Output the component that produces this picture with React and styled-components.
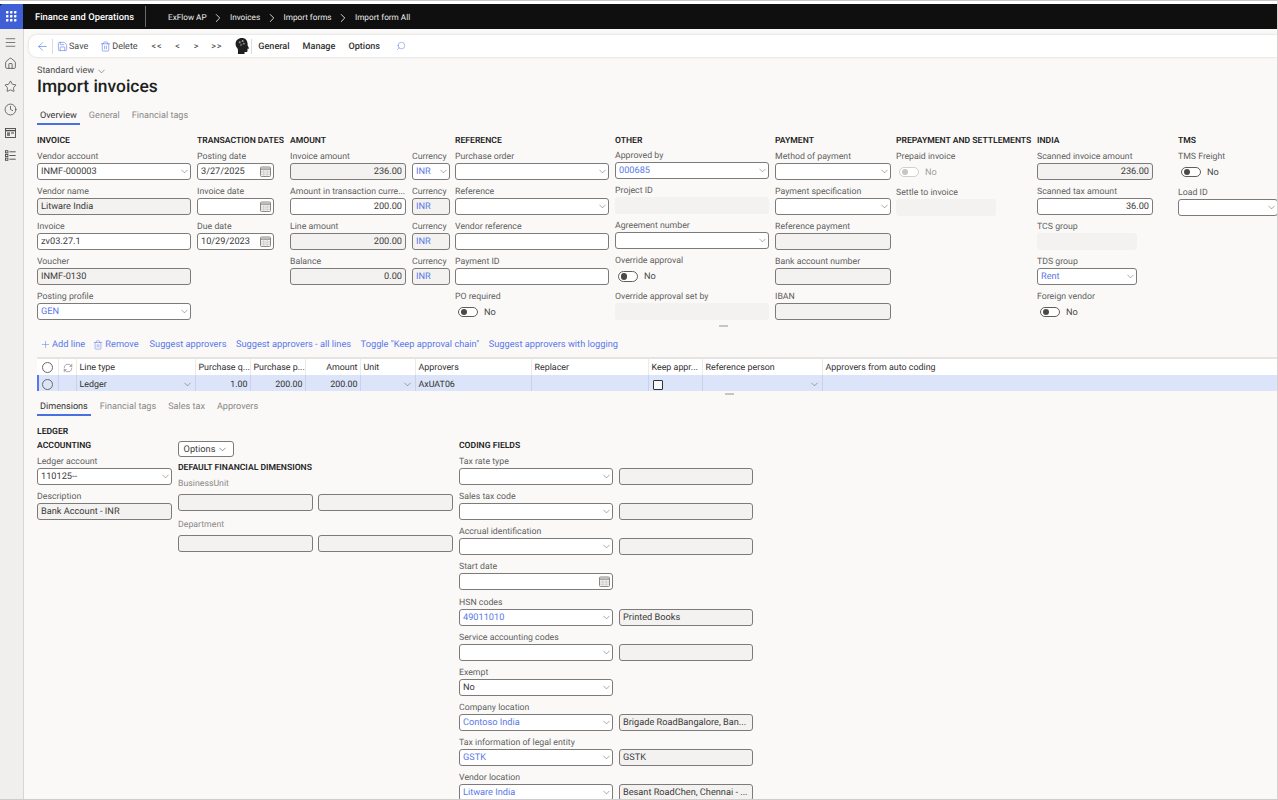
import React from 'react';
import styled, { createGlobalStyle } from 'styled-components';
import { ArrowLeft, ChevronDown, ChevronRight, Clock, Home, Menu, Plus, RefreshCw, Save, Search, Star, Trash2 } from 'lucide-react';

const Global = createGlobalStyle`
  html, body { margin: 0; padding: 0; background: #faf9f8; }
  * { box-sizing: border-box; }
  body { font-family: Roboto, "Open Sans", "Liberation Sans", sans-serif; font-size: 9px; color: #323130; text-rendering: geometricPrecision; }
`;

const BLUE = '#5a78e8';

const Shell = styled.div`
  width: 1278px; height: 800px; overflow: hidden; display: flex; flex-direction: column;
  background: #faf9f8; border-bottom: 1px solid #cfcdcb; border-right: 1px solid #d4d2d0;
`;
const TopStrip = styled.div`
  height: 4px; flex: none; background: #fff; border-top: 1.5px solid #c8c6c4;
`;
const TopBar = styled.header`
  height: 25px; flex: none; background: #0f0f0f; color: #fff; display: flex; align-items: center;
`;
const AppTile = styled.div`
  width: 23px; height: 25px; background: #3f5fd6; display: grid; place-items: center; border-radius: 3px 0 0 0;
`;
const Brand = styled.div`
  margin-left: 12px; width: 110px; height: 25px; font-size: 9.4px; font-weight: 500; line-height: 27px; white-space: nowrap;
`;
const BarDivider = styled.div`width: 1px; height: 21px; background: #6a6a6a;`;
const Crumbs = styled.nav`
  margin-left: 22px; padding-top: 2px; display: flex; align-items: center; gap: 3.7px; font-size: 8.2px; color: #eee;
  svg { margin: 0 1px; }
`;
const Body = styled.div`flex: 1; min-height: 0; display: flex;`;
const Sidebar = styled.aside`
  width: 24px; flex: none; background: #f0efed; border-right: 1px solid #d8d6d4; display: flex; flex-direction: column;
  align-items: center; padding-right: 3px; padding-top: 4px; color: #3b3a39;
`;
const SideSlot = styled.div`
  height: 23px; display: flex; align-items: center; justify-content: center; width: 100%;
  &:first-child { height: 19px; }
`;
const Main = styled.main`flex: 1; min-width: 0; display: flex; flex-direction: column;`;
const CommandBar = styled.div`
  height: 22px; flex: none; margin: 6px 0 0 5px; background: #fff; border-radius: 8px 0 0 8px;
  box-shadow: 0 0 3px rgba(0,0,0,.16); display: flex; align-items: center; padding: 2px 0 0 7px; position: relative;
`;
const CmdSep = styled.div`width: 1px; height: 15px; margin-top: -2px; background: #dedcda; margin-left: ${p => p.$ml}px; margin-right: ${p => p.$mr}px;`;
const CmdBtn = styled.span`
  display: inline-flex; align-items: center; gap: 1px; font-size: 9px; color: #4a4948; margin-left: ${p => p.$ml || 0}px;
  svg { color: ${BLUE}; margin-top: -2px; }
`;
const BackSlot = styled.span`display: flex; margin-top: -2px;`;
const NavArrow = styled.span`
  font-size: 9px; color: #444; letter-spacing: .8px; margin-left: ${p => p.$ml}px; line-height: 1;
`;
const HeadSlot = styled.span`margin: -2px 0 0 13px; display: flex;`;
const MenuItem = styled.span`
  font-size: 9.1px; font-weight: 500; color: #333; margin-left: ${p => p.$ml}px;
`;
const SearchSlot = styled.span`margin: -2px 0 0 16px; display: flex; transform: scaleX(-1);`;
const Content = styled.div`
  padding-left: 13px; display: flex; flex-direction: column; flex: 1; min-height: 0;
  & > * { flex: none; }
`;
const ViewPicker = styled.div`
  margin-top: 7px; height: 14px; display: flex; align-items: center; gap: 2px; font-size: 9.1px; color: #4a4948;
`;
const PageTitle = styled.h1`
  margin: -2px 0 0; font-size: 17.4px; line-height: 22px; font-weight: 500; color: #201f1e;
`;
const Tabs = styled.div`display: flex; gap: ${p => p.$gap}px; margin-top: ${p => p.$mt}px; height: 18px;`;
const Tab = styled.div`
  padding: 0 ${p => (p.$active ? 3 : 0)}px; height: 18px; line-height: 19px; font-size: 9.1px;
  margin-right: ${p => (p.$active ? -3 : 0)}px;
  color: ${p => (p.$active ? '#323130' : '#8a8886')};
  border-bottom: 2px solid ${p => (p.$active ? '#4a6fe0' : 'transparent')};
`;
const FormRow = styled.section`display: flex; margin-top: 8px; height: 191px; width: 1241px; overflow: hidden;`;
const Col = styled.div`flex: none; width: ${p => p.$w}px; margin-right: ${p => p.$mr || 0}px;`;
const SectionTitle = styled.h3`
  margin: 0 0 ${p => p.$mb ?? 2}px; font-size: 8.6px; line-height: 16px; height: 14px; font-weight: 600; color: #252423;
  text-transform: uppercase; white-space: nowrap;
`;
const Field = styled.div`
  margin-bottom: ${p => (p.$tight ? 4.13 : 4)}px; width: ${p => (p.$w ? `${p.$w}px` : 'auto')};
`;
const Label = styled.div`
  height: 14px; line-height: 16px; font-size: 8.75px; white-space: nowrap;
  color: ${p => (p.$faint ? '#8a8886' : '#615f5d')};
`;
const Box = styled.div`
  height: 17px; flex: ${p => (p.$grow ? 1 : 'none')}; width: ${p => (p.$w ? `${p.$w}px` : 'auto')};
  border-radius: 3px; border: 1px solid ${p => (p.$bare ? '#f3f2f1' : '#7d7b79')};
  background: ${p => (p.$gray || p.$bare ? '#f3f2f1' : '#fff')};
  display: flex; align-items: center; padding: 0 3px; font-size: 9.2px; white-space: nowrap; overflow: hidden;
  color: ${p => (p.$link ? BLUE : '#3b3a39')};
`;
const BoxText = styled.span`flex: 1; overflow: hidden; text-align: ${p => (p.$right ? 'right' : 'left')};`;
const Adorn = styled.span`display: flex; flex: none; margin-right: ${p => p.$mr}px;`;
const Pair = styled.div`display: flex; gap: ${p => p.$gap ?? 6}px;`;
const ToggleRow = styled.div`
  height: 18px; display: flex; align-items: center; gap: 6px; padding-left: 3px; font-size: 9.2px;
  color: ${p => (p.$off ? '#a19f9d' : '#4a4948')};
`;
const ToggleTrack = styled.span`
  width: 20px; height: 10.5px; border-radius: 6px; border: 1px solid ${p => (p.$off ? '#d2d0ce' : '#605e5c')};
  background: #fff; display: flex; align-items: center; padding-left: 1.5px;
`;
const ToggleKnob = styled.span`
  width: 6.5px; height: 6.5px; border-radius: 50%; background: ${p => (p.$off ? '#c8c6c4' : '#4a4948')};
`;
const Splitter = styled.div`
  width: 9px; height: 2px; background: #c8c6c4; margin: ${p => p.$mt}px 0 0 ${p => p.$ml}px;
`;
const Actions = styled.div`
  height: 16px; margin-top: 9px; display: flex; align-items: center; padding: 1.5px 0 0 3px; color: ${BLUE}; font-size: 9.25px;
  white-space: nowrap;
`;
const Action = styled.span`
  display: inline-flex; align-items: center; gap: ${p => p.$gap ?? 1}px; margin-right: ${p => p.$mr ?? 9.5}px;
`;
const GridWrap = styled.div`margin-top: 5px; border-top: 2px solid #e6e4e2;`;
const GridRow = styled.div`
  display: grid; height: 16px; grid-template-columns: 22px 18px 119px 55px 55px 55px 55px 116px 117px 54px 120px 1fr;
  background: ${p => (p.$selected ? '#dbe4f8' : '#fff')};
  box-shadow: ${p => (p.$selected ? `inset 2px 0 0 ${BLUE}` : 'none')};
`;
const Cell = styled.div`
  display: flex; align-items: center; padding: ${p => (p.$selected ? '3px' : '1px')} 2.5px 0; font-size: 8.9px; white-space: nowrap; overflow: hidden;
  border-right: 1px solid ${p => (p.$selected ? '#c8d2ea' : '#ecebe9')};
  color: #323130;
  justify-content: ${p => p.$justify || 'flex-start'};
  &:last-child { border-right: none; }
`;
const Radio = styled.span`width: 11px; height: 11px; flex: none; border-radius: 50%; border: 1px solid #6b6967; background: transparent;`;
const Check = styled.span`width: 10px; height: 10px; flex: none; border: 1px solid #323130; background: #f6f7fc; margin-left: 1.5px; border-radius: 1px;`;
const LedgerHead = styled.div`
  margin-top: 8px; height: 14px; line-height: 16px; font-size: 8.6px; font-weight: 600; color: #252423;
`;
const Lower = styled.section`display: flex; gap: 6px;`;
const OptionsBtn = styled.div`
  margin-top: 3px; width: 56px; height: 16px; border: 1px solid #7d7b79; border-radius: 3px; background: #fff;
  display: flex; align-items: center; justify-content: center; gap: 2px; font-size: 9.2px; color: #3b3a39;
`;
const GapBlock = styled.div`margin-top: ${p => p.$mt}px;`;

const Chevron = () => <ChevronDown size={11} strokeWidth={1.1} color="#555" style={{ flex: 'none' }} />;
const CrumbChevron = () => <ChevronRight size={14} strokeWidth={1.5} />;
const Calendar = () => (
  <svg width="11" height="11" viewBox="0 0 11 11">
    <rect x="0.5" y="1" width="10" height="9.5" rx="1" fill="#f3f2f1" stroke="#8a8886" />
    <path d="M0.5 3.2h10" stroke="#8a8886" strokeWidth="1.2" />
    <path d="M3.7 3.5v7M7.2 3.5v7M1 6h9M1 8.2h9" stroke="#c8c6c4" strokeWidth=".7" />
  </svg>
);

const Input = ({ v = '', kind = 'text', tone, link, right, w, grow }) => (
  <Box $gray={tone === 'gray'} $bare={tone === 'bare'} $link={link} $w={w} $grow={grow}>
    <BoxText $right={right}>{v}</BoxText>
    {kind === 'select' && <Adorn $mr={-3}><Chevron /></Adorn>}
    {kind === 'date' && <Adorn $mr={-1}><Calendar /></Adorn>}
  </Box>
);

const Toggle = ({ off }) => (
  <ToggleRow $off={off}>
    <ToggleTrack $off={off}><ToggleKnob $off={off} /></ToggleTrack>
    No
  </ToggleRow>
);

const F = ({ label, children, w, tight, faint }) => (
  <Field $w={w} $tight={tight}>
    <Label $faint={faint}>{label}</Label>
    {children}
  </Field>
);

const HeadIcon = () => (
  <svg width="14" height="18" viewBox="0 0 15 18">
    <path fill="#1f1f1f" d="M7.5.3C3.4.3.6 3 .6 6.6c0 2 .8 3.4 1.8 4.6.6.8.8 1.6.8 2.6v3.9h7v-2.2h1.7c1 0 1.5-.6 1.5-1.5v-2.1h1.1c.4 0 .6-.4.4-.7l-1.4-2.7c0-.6.1-1.3 0-2C13.1 2.6 10.9.3 7.5.3z" />
    <circle cx="5" cy="5" r="1" fill="#9a9a9a" /><circle cx="8.2" cy="3.6" r=".9" fill="#b5b5b5" />
    <circle cx="9.6" cy="6.4" r="1" fill="#8c8c8c" /><circle cx="6.4" cy="7.8" r=".8" fill="#a5a5a5" />
    <path d="M5 5l3.2-1.4 1.4 2.8-3.2 1.4z" stroke="#7a7a7a" strokeWidth=".4" fill="none" />
  </svg>
);

const Workspace = () => (
  <svg width="11" height="10" viewBox="0 0 11 10" fill="none" stroke="#4a4948">
    <rect x=".5" y=".5" width="10" height="9" strokeWidth=".9" />
    <path d="M.5 2.6h10" strokeWidth="1.3" />
    <rect x="2" y="4.3" width="3" height="3.6" fill="#777" stroke="none" />
    <rect x="6" y="4.3" width="3" height="1.4" fill="#777" stroke="none" />
  </svg>
);
const ListIcon = () => (
  <svg width="11" height="11" viewBox="0 0 11 11" fill="none" stroke="#4a4948" strokeWidth=".9">
    <rect x=".5" y=".7" width="2.4" height="2.2" /><rect x=".5" y="4.4" width="2.4" height="2.2" /><rect x=".5" y="8.1" width="2.4" height="2.2" />
    <path d="M4.4 1.8h6.3M4.4 5.5h6.3M4.4 9.2h6.3" />
  </svg>
);

const columns = [
  { t: 'Invoice', w: 154, mr: 6, fields: [
    ['Vendor account', { v: 'INMF-000003', kind: 'select' }],
    ['Vendor name', { v: 'Litware India', tone: 'gray' }],
    ['Invoice', { v: 'zv03.27.1' }],
    ['Voucher', { v: 'INMF-0130', tone: 'gray' }],
    ['Posting profile', { v: 'GEN', kind: 'select', link: true }],
  ] },
  { t: 'Transaction dates', w: 77, mr: 16, fields: [
    ['Posting date', { v: '3/27/2025', kind: 'date' }],
    ['Invoice date', { kind: 'date' }],
    ['Due date', { v: '10/29/2023', kind: 'date' }],
  ] },
  { t: 'Reference', w: 154, mr: 6, fields: [
    ['Purchase order', { kind: 'select' }],
    ['Reference', { kind: 'select' }],
    ['Vendor reference', {}],
    ['Payment ID', {}],
    ['PO required', 'toggle'],
  ] },
  { t: 'Other', w: 154, mr: 6, mb: 1.3, fields: [
    ['Approved by', { v: '000685', kind: 'select', link: true }],
    ['Project ID', { tone: 'bare' }],
    ['Agreement number', { kind: 'select' }],
    ['Override approval', 'toggle'],
    ['Override approval set by', { tone: 'bare' }],
  ] },
  { t: 'Payment', w: 116, mr: 5, fields: [
    ['Method of payment', { kind: 'select' }],
    ['Payment specification', { kind: 'select' }],
    ['Reference payment', { tone: 'gray' }],
    ['Bank account number', { tone: 'gray' }],
    ['IBAN', { tone: 'gray' }],
  ] },
  { t: 'Prepayment and settlements', w: 136, mr: 5, fields: [
    ['Prepaid invoice', 'toggleOff'],
    ['Settle to invoice', { tone: 'bare', w: 100 }],
  ] },
  { t: 'India', w: 136, mr: 5, fields: [
    ['Scanned invoice amount', { v: '236.00', tone: 'gray', right: true, w: 116 }],
    ['Scanned tax amount', { v: '36.00', right: true, w: 116 }],
    ['TCS group', { tone: 'bare', w: 100 }],
    ['TDS group', { v: 'Rent', kind: 'select', link: true, w: 100 }],
    ['Foreign vendor', 'toggle'],
  ] },
  { t: 'TMS', w: 100, fields: [
    ['TMS Freight', 'toggle'],
    ['Load ID', { kind: 'select' }],
  ] },
];

const amounts = [
  ['Invoice amount', { v: '236.00', tone: 'gray', right: true }, { v: 'INR', link: true, kind: 'select' }],
  ['Amount in transaction curre...', { v: '200.00', right: true }, { v: 'INR', link: true, tone: 'gray' }],
  ['Line amount', { v: '200.00', tone: 'gray', right: true }, { v: 'INR', link: true, tone: 'gray' }],
  ['Balance', { v: '0.00', tone: 'gray', right: true }, { v: 'INR', link: true, tone: 'gray' }],
];

const coding = [
  ['Tax rate type', { kind: 'select' }, { tone: 'gray' }],
  ['Sales tax code', { kind: 'select' }, { tone: 'gray' }],
  ['Accrual identification', { kind: 'select' }, { tone: 'gray' }],
  ['Start date', { kind: 'date' }],
  ['HSN codes', { v: '49011010', kind: 'select', link: true }, { v: 'Printed Books', tone: 'gray' }],
  ['Service accounting codes', { kind: 'select' }, { tone: 'gray' }],
  ['Exempt', { v: 'No', kind: 'select' }],
  ['Company location', { v: 'Contoso India', kind: 'select', link: true }, { v: 'Brigade RoadBangalore, Ban...', tone: 'gray' }],
  ['Tax information of legal entity', { v: 'GSTK', kind: 'select', link: true }, { v: 'GSTK', tone: 'gray' }],
  ['Vendor location', { v: 'Litware India', kind: 'select', link: true }, { v: 'Besant RoadChen, Chennai - ...', tone: 'gray' }],
];

const renderField = ([label, spec]) => (
  <F key={label} label={label}>
    {spec === 'toggle' && <Toggle />}
    {spec === 'toggleOff' && <Toggle off />}
    {typeof spec === 'object' && <Input {...spec} />}
  </F>
);

const FormColumn = ({ c }) => (
  <Col $w={c.w} $mr={c.mr}>
    <SectionTitle $mb={c.mb}>{c.t}</SectionTitle>
    {c.fields.map(renderField)}
  </Col>
);

export default function App() {
  return (
    <Shell>
      <Global />
      <TopStrip />
      <TopBar>
        <AppTile>
          <svg width="11" height="11" viewBox="0 0 11 11" fill="#fff">
            {[0, 4, 8].flatMap(y => [0, 4, 8].map(x => <rect key={`${x}${y}`} x={x} y={y} width="2.4" height="2.4" rx=".4" />))}
          </svg>
        </AppTile>
        <Brand>Finance and Operations</Brand>
        <BarDivider />
        <Crumbs>
          ExFlow AP <CrumbChevron /> Invoices <CrumbChevron /> Import forms <CrumbChevron /> Import form All
        </Crumbs>
      </TopBar>
      <Body>
        <Sidebar>
          <SideSlot><Menu size={13} strokeWidth={1.2} /></SideSlot>
          <SideSlot><Home size={13} strokeWidth={1.3} /></SideSlot>
          <SideSlot><Star size={13} strokeWidth={1.3} /></SideSlot>
          <SideSlot><Clock size={13} strokeWidth={1.3} /></SideSlot>
          <SideSlot><Workspace /></SideSlot>
          <SideSlot><ListIcon /></SideSlot>
        </Sidebar>
        <Main>
          <CommandBar>
            <BackSlot><ArrowLeft size={13} strokeWidth={1.2} color={BLUE} /></BackSlot>
            <CmdSep $ml={3} $mr={4} />
            <CmdBtn><Save size={11} strokeWidth={1.3} />Save</CmdBtn>
            <CmdBtn $ml={12}><Trash2 size={11} strokeWidth={1.3} />Delete</CmdBtn>
            <NavArrow $ml={14}>&lt;&lt;</NavArrow>
            <NavArrow $ml={13}>&lt;</NavArrow>
            <NavArrow $ml={13}>&gt;</NavArrow>
            <NavArrow $ml={12}>&gt;&gt;</NavArrow>
            <HeadSlot><HeadIcon /></HeadSlot>
            <CmdSep $ml={2} $mr={0} />
            <MenuItem $ml={6}>General</MenuItem>
            <MenuItem $ml={13}>Manage</MenuItem>
            <MenuItem $ml={13}>Options</MenuItem>
            <SearchSlot><Search size={10} strokeWidth={1.2} color={BLUE} /></SearchSlot>
          </CommandBar>
          <Content>
            <ViewPicker>Standard view <ChevronDown size={11} strokeWidth={1.2} /></ViewPicker>
            <PageTitle>Import invoices</PageTitle>
            <Tabs $gap={12} $mt={9}>
              <Tab $active>Overview</Tab><Tab>General</Tab><Tab>Financial tags</Tab>
            </Tabs>
            <FormRow>
              <FormColumn c={columns[0]} />
              <FormColumn c={columns[1]} />
              <Col $w={160} $mr={5}>
                <SectionTitle>Amount</SectionTitle>
                {amounts.map(([label, a, b]) => (
                  <Pair key={label} $gap={6}>
                    <F label={label} w={116}><Input {...a} /></F>
                    <F label="Currency" w={38}><Input {...b} /></F>
                  </Pair>
                ))}
              </Col>
              {columns.slice(2).map(c => <FormColumn key={c.t} c={c} />)}
            </FormRow>
            <Splitter $mt={1} $ml={682} />
            <Actions>
              <Action $mr={8}><Plus size={11} strokeWidth={1.1} />Add line</Action>
              <Action $mr={11} $gap={2}><Trash2 size={10} strokeWidth={1.2} />Remove</Action>
              <Action>Suggest approvers</Action>
              <Action>Suggest approvers - all lines</Action>
              <Action>Toggle "Keep approval chain"</Action>
              <Action>Suggest approvers with logging</Action>
            </Actions>
            <GridWrap>
              <GridRow>
                <Cell $justify="center"><Radio /></Cell>
                <Cell $justify="center"><RefreshCw size={10} strokeWidth={1.2} color="#555" /></Cell>
                <Cell>Line type</Cell>
                <Cell>Purchase q...</Cell>
                <Cell>Purchase p...</Cell>
                <Cell $justify="flex-end">Amount</Cell>
                <Cell>Unit</Cell>
                <Cell>Approvers</Cell>
                <Cell>Replacer</Cell>
                <Cell>Keep appr...</Cell>
                <Cell>Reference person</Cell>
                <Cell>Approvers from auto coding</Cell>
              </GridRow>
              <GridRow $selected>
                <Cell $selected $justify="center"><Radio /></Cell>
                <Cell $selected />
                <Cell $selected $justify="space-between">Ledger<Chevron /></Cell>
                <Cell $selected $justify="flex-end">1.00</Cell>
                <Cell $selected $justify="flex-end">200.00</Cell>
                <Cell $selected $justify="flex-end">200.00</Cell>
                <Cell $selected $justify="flex-end"><Chevron /></Cell>
                <Cell $selected>AxUAT06</Cell>
                <Cell $selected />
                <Cell $selected><Check /></Cell>
                <Cell $selected $justify="flex-end"><Chevron /></Cell>
                <Cell $selected />
              </GridRow>
            </GridWrap>
            <Splitter $mt={2} $ml={688} />
            <Tabs $gap={12} $mt={3}>
              <Tab $active>Dimensions</Tab><Tab>Financial tags</Tab><Tab>Sales tax</Tab><Tab>Approvers</Tab>
            </Tabs>
            <LedgerHead>LEDGER</LedgerHead>
            <Lower>
              <Col $w={135}>
                <SectionTitle>Accounting</SectionTitle>
                <F label="Ledger account"><Input v="110125--" kind="select" /></F>
                <F label="Description"><Input v="Bank Account - INR" tone="gray" /></F>
              </Col>
              <Col $w={275}>
                <OptionsBtn>Options <ChevronDown size={11} strokeWidth={1.2} /></OptionsBtn>
                <GapBlock $mt={3}><SectionTitle>Default financial dimensions</SectionTitle></GapBlock>
                <Label $faint>BusinessUnit</Label>
                <GapBlock $mt={4}>
                  <Pair $gap={5}><Input tone="gray" grow /><Input tone="gray" grow /></Pair>
                </GapBlock>
                <GapBlock $mt={5.5}><Label $faint>Department</Label></GapBlock>
                <GapBlock $mt={4.5}>
                  <Pair $gap={5}><Input tone="gray" grow /><Input tone="gray" grow /></Pair>
                </GapBlock>
              </Col>
              <Col $w={294}>
                <SectionTitle>Coding fields</SectionTitle>
                {coding.map(([label, a, b]) => (
                  <F key={label} label={label} tight>
                    <Pair $gap={6}>
                      <Input {...a} w={154} />
                      {b && <Input {...b} w={134} />}
                    </Pair>
                  </F>
                ))}
              </Col>
            </Lower>
          </Content>
        </Main>
      </Body>
    </Shell>
  );
}
